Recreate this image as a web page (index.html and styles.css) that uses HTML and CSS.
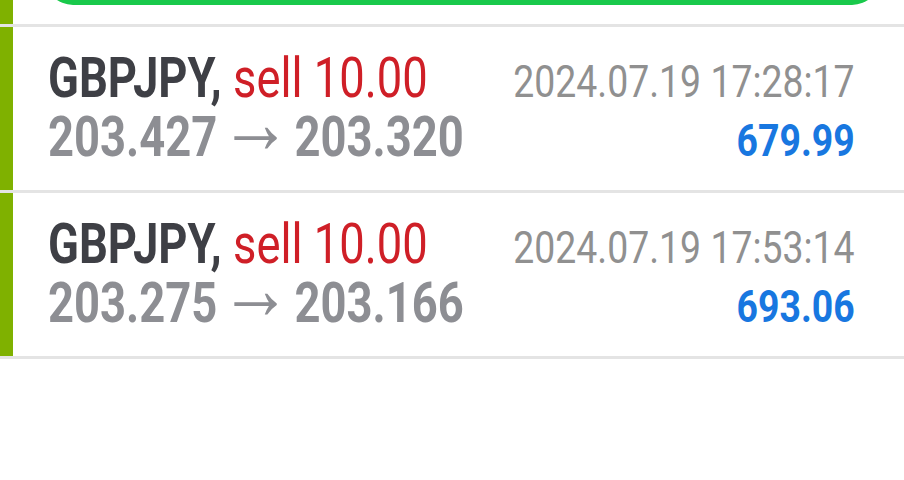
FILE: index.html
```html
<html lang="en">

<head>
  <meta charset="UTF-8">
  <meta name="viewport" content="width=device-width, initial-scale=1.0">
  <title>Trade History</title>
  <link rel="stylesheet" href="styles.css">
</head>

<body>
  <div class="top">
    <div class="stripe"></div>
    <div class="pill"></div>
  </div>

  <div class="trade">
    <div class="stripe"></div>
    <div class="info">
      <div class="cell left"><b class="symbol">GBPJPY,</b> <span class="sell">sell 10.00</span></div>
      <div class="cell right date">2024.07.19 17:28:17</div>
      <div class="cell left prices"><b>203.427</b> <span class="arrow">&rarr;</span> <b>203.320</b></div>
      <div class="cell right profit">679.99</div>
    </div>
  </div>

  <div class="trade">
    <div class="stripe"></div>
    <div class="info">
      <div class="cell left"><b class="symbol">GBPJPY,</b> <span class="sell">sell 10.00</span></div>
      <div class="cell right date">2024.07.19 17:53:14</div>
      <div class="cell left prices"><b>203.275</b> <span class="arrow">&rarr;</span> <b>203.166</b></div>
      <div class="cell right profit">693.06</div>
    </div>
  </div>
</body>

</html>
```

FILE: styles.css
```css
body {
  margin: 0;
  background-color: #fff;
  font-family: Roboto, "Liberation Sans", sans-serif;
}

.top {
  display: flex;
  height: 24px;
  overflow: hidden;
  border-bottom: 3px solid #e4e4e4;
}

.stripe {
  width: 13px;
  flex-shrink: 0;
  background-color: #7fb100;
}

.pill {
  width: 835px;
  height: 60px;
  margin-top: -55px;
  margin-left: 32px;
  border-radius: 28px;
  background-color: #19c94b;
}

.trade {
  display: flex;
  height: 163px;
  border-bottom: 3px solid #e4e4e4;
}

.info {
  flex: 1;
  min-width: 0;
  display: grid;
  grid-template-columns: minmax(0, 1fr) auto;
  align-items: baseline;
  align-content: start;
  padding: 22px 49px 0 35px;
  white-space: nowrap;
}

.cell.left {
  font-size: 56px;
  line-height: 59px;
  transform: scaleX(0.81);
  transform-origin: left;
}

.cell.right {
  font-size: 44px;
  line-height: 51px;
  transform: scaleX(0.85);
  transform-origin: right;
  text-align: right;
}

.symbol {
  color: #3e3f45;
}

.sell {
  color: #cf1f27;
}

.prices {
  color: #8d8e93;
}

.arrow {
  margin: 0 -10px 0 -11px;
  font-family: "Liberation Sans", sans-serif;
  font-size: 1.58em;
  font-weight: normal;
  line-height: 0;
  vertical-align: 3px;
}

.date {
  color: #909090;
}

.profit {
  color: #1877e0;
  font-weight: bold;
}
```
